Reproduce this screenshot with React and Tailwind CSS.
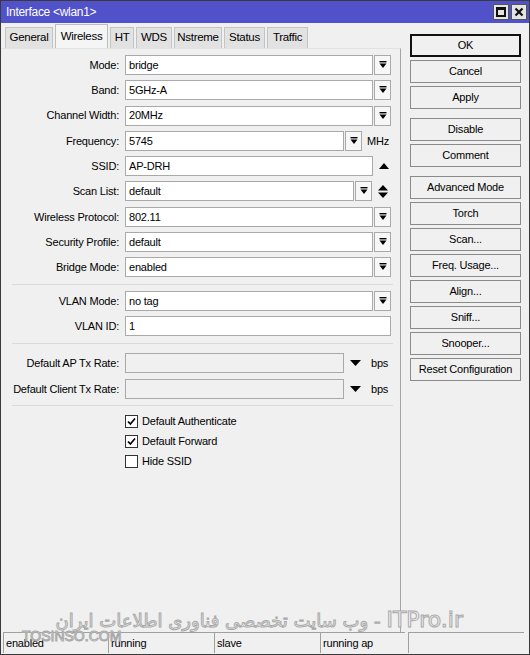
import React from "react";

function DropBtn() {
  return (
    <div className="w-[17px] h-[20px] border border-[#a9a9a9] bg-[#f7f7f7] flex items-center justify-center shrink-0">
      <svg width="8" height="8" viewBox="0 0 8 8">
        <rect x="0.5" y="0" width="7" height="1.4" fill="#000" />
        <path d="M0.5 2.6 H7.5 L4 7 Z" fill="#000" />
      </svg>
    </div>
  );
}

function Label({ children }) {
  return <div className="w-[124px] pr-[6px] text-right shrink-0 whitespace-nowrap">{children}</div>;
}

function Input({ value, w, disabled }) {
  return (
    <div
      className={
        "h-[20px] border border-[#a9a9a9] px-[3px] flex items-center shrink-0 " +
        (disabled ? "bg-[#f0f0f0]" : "bg-white")
      }
      style={{ width: w }}
    >
      {value}
    </div>
  );
}

function ComboRow({ label, value }) {
  return (
    <div className="flex items-center h-[20px]">
      <Label>{label}:</Label>
      <Input value={value} w={248} />
      <div className="ml-[1px]">
        <DropBtn />
      </div>
    </div>
  );
}

function Sep() {
  return <div className="ml-[11px] w-[381px] h-px bg-[#dadada]" />;
}

function Check({ checked, label }) {
  return (
    <div className="flex items-center h-[20px] pl-[124px]">
      <div className="w-[13px] h-[13px] border border-[#333] bg-white flex items-center justify-center">
        {checked && (
          <svg width="9" height="9" viewBox="0 0 9 9">
            <path d="M1 4.5 L3.4 7 L8 1.5" stroke="#000" strokeWidth="1.7" fill="none" />
          </svg>
        )}
      </div>
      <span className="ml-[4px]">{label}</span>
    </div>
  );
}

function Btn({ children, primary }) {
  return (
    <div
      className={
        "w-[111px] h-[23px] flex items-center justify-center bg-[#f0f0f0] " +
        (primary ? "border-2 border-[#111]" : "border border-[#8a8a8a]")
      }
    >
      {children}
    </div>
  );
}

const tabs = [
  { name: "General", w: "w-[48px]" },
  { name: "Wireless", w: "w-[53px]" },
  { name: "HT", w: "w-[24px]" },
  { name: "WDS", w: "w-[36px]" },
  { name: "Nstreme", w: "w-[48px]" },
  { name: "Status", w: "w-[41px]" },
  { name: "Traffic", w: "w-[41px]" },
];

export default function App() {
  return (
    <div className="w-[530px] h-[655px] bg-[#f0f0f0] border border-[#3a3a3a] flex flex-col relative overflow-hidden font-['Liberation_Sans',Arial,sans-serif] text-[11px] tracking-[-0.2px] text-black">
      {/* title bar */}
      <div className="h-[22px] bg-[#5151c9] flex items-center justify-between pl-[5px] pr-[2px] shrink-0">
        <span className="text-white text-[12px] tracking-[-0.3px]">Interface &lt;wlan1&gt;</span>
        <div className="flex gap-[2px]">
          <div className="w-[16px] h-[16px] bg-[#e4e4e4] border border-[#555] flex items-center justify-center">
            <div className="w-[10px] h-[10px] border-2 border-t-[3px] border-[#111]" />
          </div>
          <div className="w-[16px] h-[16px] bg-[#e4e4e4] border border-[#555] flex items-center justify-center">
            <svg width="10" height="10" viewBox="0 0 10 10">
              <path d="M1.5 1.5 L8.5 8.5 M8.5 1.5 L1.5 8.5" stroke="#111" strokeWidth="2.2" />
            </svg>
          </div>
        </div>
      </div>

      {/* body */}
      <div className="flex flex-1 min-h-0">
        <div className="w-[400px] flex flex-col shrink-0">
          {/* tabs */}
          <div className="flex items-end gap-[2px] h-[24px] pl-[4px] shrink-0 mt-[1px] text-[11.5px] tracking-[-0.3px]">
            {tabs.map((t) =>
              t.name === "Wireless" ? (
                <div
                  key={t.name}
                  className={t.w + " h-[24px] relative z-10 bg-[#f5f5f5] border border-b-0 border-[#bdbdbd] flex justify-center pt-[3px]"}
                >
                  {t.name}
                </div>
              ) : (
                <div
                  key={t.name}
                  className={t.w + " h-[21px] bg-[#e2e2e2] border border-b-0 border-[#c4c4c4] flex items-center justify-center"}
                >
                  {t.name}
                </div>
              )
            )}
          </div>
          <div className="flex-1 border-r border-[#a5a5a5] border-t border-t-[#e2e2e2] flex flex-col pt-[6px]">
            <div className="flex flex-col gap-[5.3px]">
              <ComboRow label="Mode" value="bridge" />
              <ComboRow label="Band" value="5GHz-A" />
              <ComboRow label="Channel Width" value="20MHz" />
              <div className="flex items-center h-[20px]">
                <Label>Frequency:</Label>
                <Input value="5745" w={219} />
                <div className="ml-[1px]">
                  <DropBtn />
                </div>
                <span className="ml-[5px]">MHz</span>
              </div>
              <div className="flex items-center h-[20px]">
                <Label>SSID:</Label>
                <Input value="AP-DRH" w={248} />
                <svg className="ml-[6px]" width="10" height="6" viewBox="0 0 10 6">
                  <path d="M0 6 L5 0 L10 6 Z" fill="#000" />
                </svg>
              </div>
              <div className="flex items-center h-[20px]">
                <Label>Scan List:</Label>
                <Input value="default" w={229} />
                <div className="ml-[1px]">
                  <DropBtn />
                </div>
                <svg className="ml-[6px]" width="10" height="13" viewBox="0 0 10 13">
                  <path d="M0 5.5 L5 0 L10 5.5 Z M0 7.5 L10 7.5 L5 13 Z" fill="#000" />
                </svg>
              </div>
              <ComboRow label="Wireless Protocol" value="802.11" />
              <ComboRow label="Security Profile" value="default" />
              <ComboRow label="Bridge Mode" value="enabled" />
            </div>
            <div className="mt-[7px] mb-[6px]">
              <Sep />
            </div>
            <div className="flex flex-col gap-[5px]">
              <ComboRow label="VLAN Mode" value="no tag" />
              <div className="flex items-center h-[20px]">
                <Label>VLAN ID:</Label>
                <Input value="1" w={266} />
              </div>
            </div>
            <div className="mt-[7px] mb-[9px]">
              <Sep />
            </div>
            <div className="flex flex-col gap-[6px]">
              {["Default AP Tx Rate", "Default Client Tx Rate"].map((l) => (
                <div key={l} className="flex items-center h-[20px]">
                  <Label>{l}:</Label>
                  <Input value="" w={219} disabled />
                  <svg className="ml-[6px]" width="11" height="6" viewBox="0 0 11 6">
                    <path d="M0 0 L11 0 L5.5 6 Z" fill="#000" />
                  </svg>
                  <span className="ml-[10px]">bps</span>
                </div>
              ))}
            </div>
            <div className="mt-[6px] mb-[5px]">
              <Sep />
            </div>
            <Check checked label="Default Authenticate" />
            <Check checked label="Default Forward" />
            <Check label="Hide SSID" />
          </div>
        </div>

        {/* buttons */}
        <div className="flex flex-col pl-[9px] pt-[11px]">
          <div className="flex flex-col gap-[3px]">
            <Btn primary>OK</Btn>
            <Btn>Cancel</Btn>
            <Btn>Apply</Btn>
          </div>
          <div className="flex flex-col gap-[3px] mt-[9px]">
            <Btn>Disable</Btn>
            <Btn>Comment</Btn>
          </div>
          <div className="flex flex-col gap-[3px] mt-[9px]">
            <Btn>Advanced Mode</Btn>
            <Btn>Torch</Btn>
            <Btn>Scan...</Btn>
            <Btn>Freq. Usage...</Btn>
            <Btn>Align...</Btn>
            <Btn>Sniff...</Btn>
            <Btn>Snooper...</Btn>
            <Btn>Reset Configuration</Btn>
          </div>
        </div>
      </div>

      {/* status bar */}
      <div className="h-[21px] flex pl-[2px] pr-[5px] shrink-0 mb-[1px]">
        <div className="w-[105px] border-t border-l border-[#a0a0a0] pl-[2px] flex items-center">enabled</div>
        <div className="w-[106px] border-t border-l border-[#a0a0a0] pl-[2px] flex items-center">running</div>
        <div className="w-[106px] border-t border-l border-[#a0a0a0] pl-[2px] flex items-center">slave</div>
        <div className="w-[85px] border-t border-l border-[#a0a0a0] pl-[2px] flex items-center">running ap</div>
        <div className="flex-1 ml-[3px] border-t border-l border-[#a0a0a0]" />
      </div>

      {/* watermark */}
      <div
        dir="rtl"
        className="absolute right-[66px] top-[602px] whitespace-nowrap font-['DejaVu_Sans',sans-serif] tracking-normal text-[#f6f6f6] [-webkit-text-stroke:1px_#a8a8a8] pointer-events-none flex items-baseline"
      >
        <span dir="ltr" className="text-[22px]">ITPro.ir</span>
        <span className="text-[18px] mr-[6px]">- وب سایت تخصصی فناوری اطلاعات ایران</span>
      </div>
      <div className="absolute left-[21px] top-[625px] whitespace-nowrap text-[14px] tracking-normal text-[#f6f6f6] [-webkit-text-stroke:1px_#a8a8a8] pointer-events-none">
        TOSINSO.COM
      </div>
    </div>
  );
}
